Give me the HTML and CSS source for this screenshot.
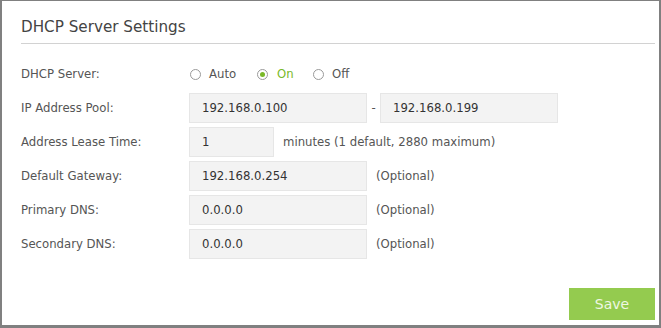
FILE: index.html
```html
<!DOCTYPE html>
<html>
<head>
<meta charset="utf-8">
<link rel="stylesheet" href="styles.css">
</head>
<body>
<div class="frame">
  <h2 class="title">DHCP Server Settings</h2>
  <div class="form">
    <div class="row radio-row">
      <span class="label">DHCP Server:</span>
      <div class="radios">
        <label class="radio"><span class="dot"></span>Auto</label>
        <label class="radio checked"><span class="dot"></span>On</label>
        <label class="radio"><span class="dot"></span>Off</label>
      </div>
    </div>
    <div class="row">
      <span class="label">IP Address Pool:</span>
      <div class="input">192.168.0.100</div>
      <span class="dash">-</span>
      <div class="input">192.168.0.199</div>
    </div>
    <div class="row">
      <span class="label">Address Lease Time:</span>
      <div class="input short">1</div>
      <span class="hint lease">minutes (1 default, 2880 maximum)</span>
    </div>
    <div class="row">
      <span class="label">Default Gateway:</span>
      <div class="input">192.168.0.254</div>
      <span class="hint">(Optional)</span>
    </div>
    <div class="row">
      <span class="label">Primary DNS:</span>
      <div class="input">0.0.0.0</div>
      <span class="hint">(Optional)</span>
    </div>
    <div class="row">
      <span class="label">Secondary DNS:</span>
      <div class="input">0.0.0.0</div>
      <span class="hint">(Optional)</span>
    </div>
  </div>
  <div class="actions">
    <button class="save">Save</button>
  </div>
</div>
</body>
</html>
```
FILE: styles.css
```css
html, body {
  margin: 0;
  padding: 0;
  background: #ffffff;
}
body {
  font-family: "DejaVu Sans", Verdana, sans-serif;
  font-size: 11.7px;
  color: #555555;
}
.frame {
  box-sizing: border-box;
  width: 661px;
  height: 328px;
  border-style: solid;
  border-color: #808080;
  border-width: 1px 2px 3px 2px;
  padding: 0 4px 5px 19px;
  display: flex;
  flex-direction: column;
}
.title {
  margin: 0;
  padding: 16px 0 0 0;
  height: 26px;
  font-size: 15.2px;
  font-weight: normal;
  color: #444444;
  line-height: 20px;
  border-bottom: 1px solid #d2d2d2;
}
.form {
  display: flex;
  flex-direction: column;
  gap: 4px;
  margin-top: 15px;
}
.row {
  display: flex;
  align-items: center;
  height: 30px;
}
.label {
  width: 168px;
  flex: none;
  color: #555555;
}
.radios {
  display: flex;
  align-items: center;
}
.radio {
  display: flex;
  align-items: center;
  color: #555555;
}
.radio:nth-child(1) { width: 67px; }
.radio:nth-child(2) { width: 56px; }
.dot {
  box-sizing: border-box;
  width: 11px;
  height: 11px;
  border: 1px solid #9a9a9a;
  border-radius: 50%;
  margin: 0 8px 0 1px;
  background: #fff;
  position: relative;
}
.radio.checked .dot {
  margin-right: 9px;
}
.radio.checked {
  color: #7ab929;
}
.radio.checked .dot::after {
  content: "";
  position: absolute;
  left: 2px;
  top: 2px;
  width: 5px;
  height: 5px;
  border-radius: 50%;
  background: #7ab929;
}
.input {
  box-sizing: border-box;
  width: 178px;
  height: 30px;
  background: #f3f3f3;
  border: 1px solid #e6e6e6;
  padding-left: 12px;
  display: flex;
  align-items: center;
  color: #333333;
}
.input.short {
  width: 85px;
}
.dash {
  width: 13px;
  text-align: center;
}
.hint {
  margin-left: 9px;
}
.actions {
  margin-top: auto;
  display: flex;
  justify-content: flex-end;
}
.save {
  width: 86px;
  height: 32px;
  border: none;
  background: #94cb4f;
  color: #eef7e2;
  font-family: "DejaVu Sans", Verdana, sans-serif;
  font-size: 14px;
  padding: 0;
}
```
